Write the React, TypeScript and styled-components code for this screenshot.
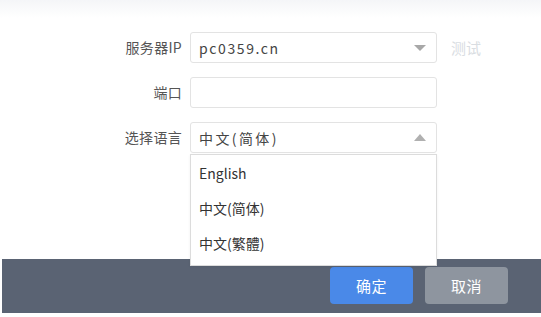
import React from "react";
import styled, { createGlobalStyle } from "styled-components";

const GlobalStyle = createGlobalStyle`
  html, body {
    margin: 0;
    padding: 0;
    background: #ffffff;
  }
  body {
    font-family: "Noto Sans CJK SC", "Noto Sans", sans-serif;
  }
`;

const Page = styled.div`
  position: relative;
  width: 541px;
  height: 317px;
  overflow: hidden;
  background: #ffffff;
  display: flex;
  flex-direction: column;
`;

const TopShade = styled.div`
  position: absolute;
  top: 0;
  left: 0;
  right: 0;
  height: 18px;
  background: linear-gradient(to bottom, rgba(236, 238, 242, 0.55), rgba(255, 255, 255, 0));
  pointer-events: none;
`;

const Form = styled.div`
  height: 259px;
  box-sizing: border-box;
  padding-top: 32px;
  display: grid;
  grid-template-columns: 182px 247px auto;
  grid-auto-rows: 31px;
  column-gap: 8px;
  row-gap: 14px;
  align-content: start;
`;

const Label = styled.div`
  font-size: 14px;
  color: #555;
  text-align: right;
  line-height: 31px;
  letter-spacing: 0.3px;
`;

const Field = styled.div`
  position: relative;
  box-sizing: border-box;
  height: 31px;
  border: 1px solid #e3e3e3;
  border-radius: 3px;
  display: flex;
  align-items: center;
  padding: 0 8px 0 8px;
  background: #fff;
`;

const Value = styled.span<{ $mono?: boolean }>`
  flex: 1;
  font-size: 14px;
  color: #444;
  letter-spacing: ${(p) => (p.$mono ? "1.6px" : "2.4px")};
`;

const Arrow = styled.span<{ $up?: boolean }>`
  width: 0;
  height: 0;
  margin-right: 2px;
  border-left: 6px solid transparent;
  border-right: 6px solid transparent;
  ${(p) =>
    p.$up
      ? "border-bottom: 7px solid #b0b0b0;"
      : "border-top: 6px solid #a8a8a8;"}
`;

const TestLink = styled.span`
  font-size: 15px;
  color: #d9dde2;
  line-height: 31px;
  padding-left: 6px;
`;

const Menu = styled.ul`
  position: absolute;
  z-index: 2;
  top: 31px;
  left: -1px;
  width: 247px;
  box-sizing: border-box;
  margin: 0;
  padding: 1px 0 4px;
  list-style: none;
  background: #fff;
  border: 1px solid #dcdcdc;
  box-shadow: 0 1px 3px rgba(0, 0, 0, 0.06);
`;

const MenuItem = styled.li`
  height: 35px;
  line-height: 35px;
  padding-left: 8px;
  font-size: 14px;
  color: #333;
`;

const Footer = styled.div`
  height: 54px;
  margin-left: 2px;
  background: #5a6373;
  display: flex;
  justify-content: flex-end;
  align-items: flex-start;
  gap: 12px;
  padding: 8px 33px 0 0;
  box-sizing: border-box;
`;

const Button = styled.button<{ $primary?: boolean }>`
  width: 83px;
  height: 37px;
  border: none;
  border-radius: 4px;
  font-family: "Noto Sans CJK SC", sans-serif;
  font-size: 15px;
  color: #fff;
  background: ${(p) => (p.$primary ? "#4a89e8" : "#8e959f")};
  letter-spacing: 0.5px;
`;

const Empty = styled.div``;

export default function App() {
  return (
    <Page>
      <GlobalStyle />
      <TopShade />
      <Form>
        <Label>服务器IP</Label>
        <Field>
          <Value $mono>pc0359.cn</Value>
          <Arrow />
        </Field>
        <TestLink>测试</TestLink>

        <Label>端口</Label>
        <Field />
        <Empty />

        <Label>选择语言</Label>
        <Field>
          <Value>中文(简体)</Value>
          <Arrow $up />
          <Menu>
            <MenuItem>English</MenuItem>
            <MenuItem>中文(简体)</MenuItem>
            <MenuItem>中文(繁體)</MenuItem>
          </Menu>
        </Field>
        <Empty />
      </Form>
      <Footer>
        <Button $primary>确定</Button>
        <Button>取消</Button>
      </Footer>
    </Page>
  );
}
